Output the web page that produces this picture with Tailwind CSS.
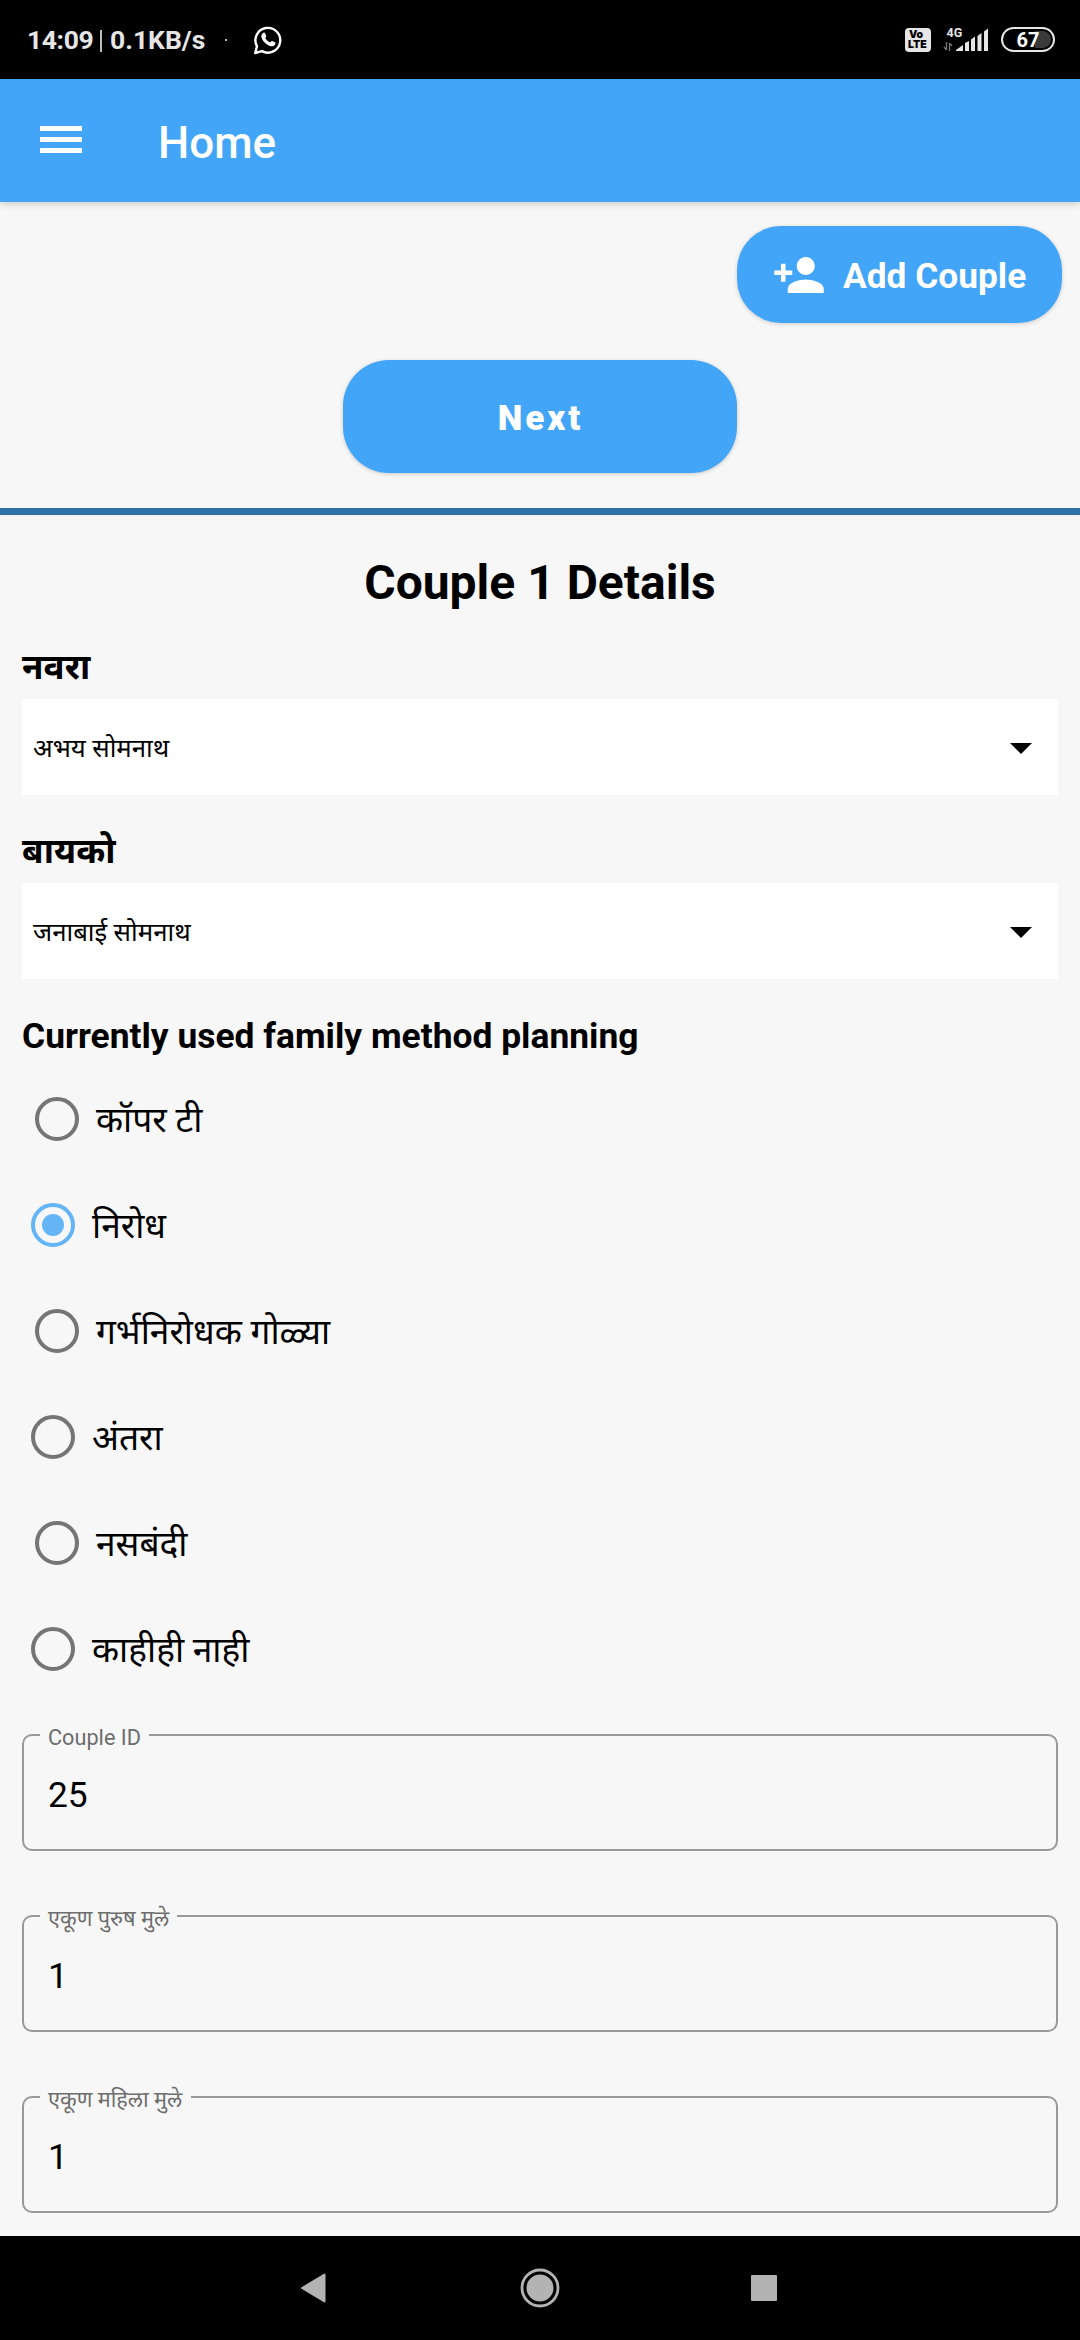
<!DOCTYPE html>
<html lang="mr">
<head>
<meta charset="utf-8">
<title>Home</title>
<script src="https://cdn.jsdelivr.net/npm/@tailwindcss/browser@4"></script>
</head>
<body class="w-[1080px] h-[2340px] overflow-hidden bg-[#f7f7f7] text-black flex flex-col font-['Roboto','Noto_Sans_Devanagari','Noto_Sans',sans-serif]">

<!-- status bar -->
<div class="h-[79px] shrink-0 bg-black flex items-center pl-[27px] pr-[25px] text-[#e6e6e6]">
  <span class="text-[26.500px] leading-[40px] font-bold w-[68px] tracking-[-0.4px] pt-[1px] whitespace-nowrap">14:09</span>
  <span class="ml-[5px] mt-[3px] w-[2px] h-[22px] bg-[#bdbdbd]"></span>
  <span class="ml-[8px] text-[26.500px] leading-[40px] font-bold w-[115px] pt-[1px] whitespace-nowrap">0.1KB/s</span>
  <span class="w-[2px] h-[2px] bg-[#bbb]"></span>
  <svg class="ml-[26px] w-[30px] h-[30px]" viewBox="0 0 30 30" fill="none">
    <path d="M2.200 28 L4 21.300 A12.400 12.400 0 1 1 8.800 26.100 Z" stroke="#fff" stroke-width="2.400" stroke-linejoin="round"/>
    <path d="M9.800 8.200c.8-.9 1.900-.8 2.300.1l1.100 2.500c.2.5.1.9-.9 2.100 1.200 2.300 2.800 3.700 5 4.700 1.300-1.600 1.500-1.800 2.100-1.500l2.500 1.200c.7.4.7 1 .4 1.900-.5 1.300-2.200 2.200-3.700 2.100-4.300-.4-9.300-5-10.200-9.300-.3-1.500.4-2.900 1.400-3.800z" fill="#fff"/>
  </svg>
  <div class="ml-auto flex items-center">
    <div class="w-[26px] h-[24px] rounded-[4px] bg-[#e6e6e6] text-black flex flex-col items-start justify-center pl-[3px] font-[Inter] font-black text-[10.500px] leading-[10px]">
      <span class="pl-px">Vo</span><span>LTE</span>
    </div>
    <svg class="ml-[11px] w-[50px] h-[28px]" viewBox="0 0 50 28">
      <text x="4.500" y="10.500" font-size="12.500" font-weight="700" fill="#e6e6e6" font-family="Roboto">4G</text>
      <path d="M4.500 16v8M2 21l2.500 3M7.500 25v-8M10 20l-2.500-3" stroke="#777" stroke-width="1.300" fill="none"/>
      <path d="M14 25v-1l7-5v6zM23 17l4-2V25h-4zM29 13.500l4-3V25h-4zM35.500 10l4-3V25h-4zM42 5.500l4-3V25h-4z" fill="#e6e6e6"/>
    </svg>
    <div class="ml-[9px] w-[54px] h-[25px] rounded-full border-2 border-[#e6e6e6] bg-linear-to-r from-black from-65% to-[#3a3a3a] to-65% bg-clip-content p-[2px] flex items-center justify-center text-[20px] leading-none font-bold text-white">67</div>
  </div>
</div>

<!-- app bar -->
<header class="relative h-[123px] shrink-0 bg-[#42a5f8] flex pl-[40px] shadow-[0_2px_8px_rgba(0,0,0,0.18)]">
  <div class="mt-[47px] w-[42px] flex flex-col gap-[6px]">
    <span class="h-[5px] bg-white"></span><span class="h-[5px] bg-white"></span><span class="h-[5px] bg-white"></span>
  </div>
  <h1 class="ml-[76px] mt-[38px] text-[44px] leading-[52px] font-medium text-white">Home</h1>
</header>

<div class="h-[306px] shrink-0 pt-[24px] flex flex-col">
  <button class="self-end mr-[18px] w-[325px] h-[97px] rounded-[44px] bg-[#42a5f8] text-white flex items-center pl-[35px] shadow-[0_1px_4px_rgba(0,0,0,0.18)]">
    <svg class="w-[54px] h-[54px]" viewBox="0 0 24 24" fill="#fff"><path d="M15 12c2.210 0 4-1.790 4-4s-1.790-4-4-4-4 1.790-4 4 1.790 4 4 4zm-9-2V7H4v3H1v2h3v3h2v-3h3v-2H6zm9 4c-2.670 0-8 1.340-8 4v2h16v-2c0-2.660-5.330-4-8-4z"/></svg>
    <span class="ml-[17px] pt-[3px] text-[35.300px] leading-[44px] font-bold whitespace-nowrap">Add Couple</span>
  </button>
  <button class="self-center mt-[37px] w-[394px] h-[113px] rounded-[46px] bg-[#42a5f8] text-white text-[35px] font-black tracking-[3px] shadow-[0_1px_4px_rgba(0,0,0,0.18)] flex items-center justify-center pt-[6px] pl-px">Next</button>
</div>

<div class="h-[7px] shrink-0 bg-[#2f74a9]"></div>

<main class="h-[1721px] shrink-0 px-[22px] flex flex-col">
  <h2 class="mt-[40px] h-[56px] leading-[56px] text-[48px] font-bold text-center">Couple 1 Details</h2>

  <label class="mt-[37px] h-[40px] leading-[40px] text-[35px] font-bold">नवरा</label>
  <div class="mt-[11px] h-[96px] shrink-0 bg-white flex items-center justify-between pl-[11px] pr-[26px]">
    <span class="pt-[3px] text-[25.800px]">अभय सोमनाथ</span>
    <svg class="mt-[3px] w-[22px] h-[11px]" viewBox="0 0 22 11"><path d="M0 0h22L11 11z"/></svg>
  </div>

  <label class="mt-[37px] h-[40px] leading-[40px] text-[35px] font-bold">बायको</label>
  <div class="mt-[11px] h-[96px] shrink-0 bg-white flex items-center justify-between pl-[11px] pr-[26px]">
    <span class="pt-[3px] text-[25.800px]">जनाबाई सोमनाथ</span>
    <svg class="mt-[3px] w-[22px] h-[11px]" viewBox="0 0 22 11"><path d="M0 0h22L11 11z"/></svg>
  </div>

  <h3 class="mt-[37px] h-[40px] leading-[40px] text-[35.400px] font-bold">Currently used family method planning</h3>

  <div class="mt-[10px] shrink-0 flex flex-col text-[35.300px]">
    <div class="h-[106px] flex items-center gap-[17px] pl-[13px]"><span class="size-[44px] rounded-full border-4 border-[#757575]"></span><span class="pt-[2px]">कॉपर टी</span></div>
    <div class="h-[106px] flex items-center gap-[17px] pl-[9px]"><span class="size-[44px] rounded-full border-4 border-[#64b5f6] flex items-center justify-center"><span class="size-[22px] rounded-full bg-[#64b5f6]"></span></span><span class="pt-[2px]">निरोध</span></div>
    <div class="h-[106px] flex items-center gap-[17px] pl-[13px]"><span class="size-[44px] rounded-full border-4 border-[#757575]"></span><span class="pt-[2px]">गर्भनिरोधक गोळ्या</span></div>
    <div class="h-[106px] flex items-center gap-[17px] pl-[9px]"><span class="size-[44px] rounded-full border-4 border-[#757575]"></span><span class="pt-[2px]">अंतरा</span></div>
    <div class="h-[106px] flex items-center gap-[17px] pl-[13px]"><span class="size-[44px] rounded-full border-4 border-[#757575]"></span><span class="pt-[2px]">नसबंदी</span></div>
    <div class="h-[106px] flex items-center gap-[17px] pl-[9px]"><span class="size-[44px] rounded-full border-4 border-[#757575]"></span><span class="pt-[2px]">काहीही नाही</span></div>
  </div>

  <div class="mt-[32px] shrink-0 flex flex-col gap-[64px]">
    <div class="relative h-[117px] rounded-[10px] border-2 border-[#999] pl-[24px] pt-[37px] text-[35.300px] leading-[44px]">
      <span class="absolute left-[16px] top-[-13px] w-[109px] pl-[8px] bg-[#f7f7f7] text-[21.700px] leading-[30px] text-[#6d6d6d] whitespace-nowrap">Couple ID</span>25
    </div>
    <div class="relative h-[117px] rounded-[10px] border-2 border-[#999] pl-[24px] pt-[37px] text-[35.300px] leading-[44px]">
      <span class="absolute left-[16px] top-[-13px] w-[137px] pl-[8px] bg-[#f7f7f7] text-[21.700px] leading-[30px] text-[#6d6d6d] whitespace-nowrap">एकूण पुरुष मुले</span>1
    </div>
    <div class="relative h-[117px] rounded-[10px] border-2 border-[#999] pl-[24px] pt-[37px] text-[35.300px] leading-[44px]">
      <span class="absolute left-[16px] top-[-13px] w-[151px] pl-[8px] bg-[#f7f7f7] text-[21.700px] leading-[30px] text-[#6d6d6d] whitespace-nowrap">एकूण महिला मुले</span>1
    </div>
  </div>
</main>

<!-- navigation bar -->
<nav class="h-[104px] shrink-0 bg-black flex items-center justify-between pl-[300px] pr-[303px]">
  <svg class="w-[26px] h-[30px]" viewBox="0 0 26 30"><path d="M24.500 1.500v27L2 15z" fill="#b3b3b3" stroke="#b3b3b3" stroke-width="2" stroke-linejoin="round"/></svg>
  <svg class="ml-[3px] w-[40px] h-[40px]" viewBox="0 0 40 40"><circle cx="20" cy="20" r="18" fill="none" stroke="#b3b3b3" stroke-width="2.800"/><circle cx="20" cy="20" r="13.500" fill="#b3b3b3"/></svg>
  <span class="w-[26px] h-[26px] rounded-[1px] bg-[#b3b3b3]"></span>
</nav>
</body>
</html>
